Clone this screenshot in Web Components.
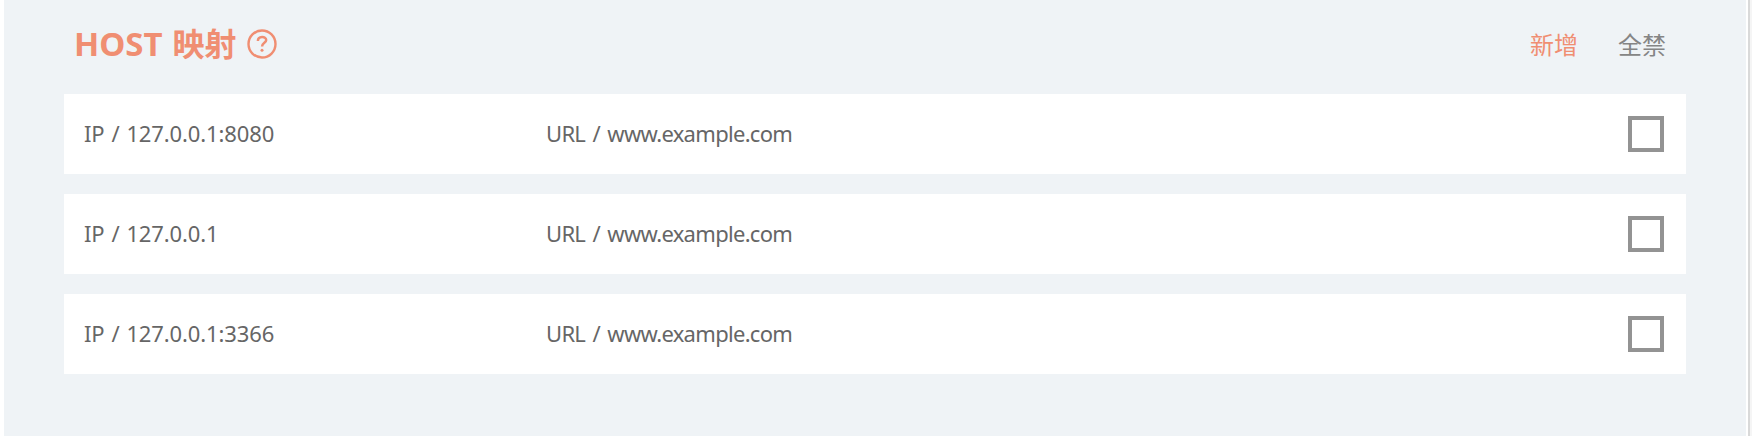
<!DOCTYPE html>
<html lang="zh-CN">
<head>
<meta charset="utf-8">
<title>HOST 映射</title>
<style>
html, body { margin: 0; height: 100%; background: #fff; overflow: hidden; }
</style>
</head>
<body>
<host-panel></host-panel>
<script>
class HelpIcon extends HTMLElement {
  constructor() {
    super();
    this.attachShadow({ mode: 'open' }).innerHTML = `
      <style>:host{display:block;width:30px;height:30px}svg{display:block}</style>
      <svg width="30" height="30" viewBox="0 0 30 30" fill="none" stroke="#f08e72">
        <circle cx="15" cy="15" r="13.5" stroke-width="2.4"/>
        <path d="M10.9 12C10.9 6.6 19.2 6.9 19.2 11.1C19.2 14 15.1 13.8 15.1 17.6" stroke-width="2.5"/>
        <circle cx="15" cy="21.3" r="1.5" fill="#f08e72" stroke="none"/>
      </svg>`;
  }
}
customElements.define('help-icon', HelpIcon);

class PanelAction extends HTMLElement {
  constructor() {
    super();
    this.attachShadow({ mode: 'open' }).innerHTML = `
      <style>
        :host{display:block;font:24px/32px "Noto Sans CJK SC",sans-serif;color:#858585;white-space:nowrap;cursor:pointer}
        :host([primary]){color:#f08e72}
      </style><slot></slot>`;
  }
}
customElements.define('panel-action', PanelAction);

class HostRow extends HTMLElement {
  constructor() {
    super();
    this.attachShadow({ mode: 'open' }).innerHTML = `
      <style>
        :host{display:grid;grid-template-columns:462px 1fr 36px;align-items:center;box-sizing:border-box;
          height:80px;padding:0 22px 0 20px;background:#fff;color:#666;
          font:22px/30px "Noto Sans",sans-serif;white-space:pre}
        .ip,.url{padding-bottom:2px}
        .ip{letter-spacing:-.12px;word-spacing:1.3px}
        .url{letter-spacing:-.7px;word-spacing:2.3px}
        .check{box-sizing:border-box;width:36px;height:36px;border:4px solid #939393}
      </style>
      <div class="ip"><slot name="ip"></slot></div>
      <div class="url"><slot name="url"></slot></div>
      <div class="check" role="checkbox" aria-checked="false"></div>`;
  }
}
customElements.define('host-row', HostRow);

class HostPanel extends HTMLElement {
  constructor() {
    super();
    this.attachShadow({ mode: 'open' }).innerHTML = `
      <style>
        :host{display:flex;height:100%;padding-left:4px;box-sizing:border-box}
        main{flex:1;box-sizing:border-box;padding:0 60px;background:#eff3f6}
        header{display:flex;align-items:center;height:94px;box-sizing:border-box;padding:0 20px 6px 10px}
        h1{display:flex;align-items:baseline;gap:10px;margin:0;padding-bottom:2px;color:#f08e72;white-space:nowrap;
          font:bold 33px/44px "Noto Sans",sans-serif}
        .cjk{font:bold 32px/44px "Noto Sans CJK SC",sans-serif}
        help-icon{margin-left:10.5px}
        nav{display:flex;gap:40px;margin-left:auto}
        .rows{display:grid;gap:20px}
        .edge{width:2px;margin-left:2px;background:#d9d9d9}
        .outer{width:2px;background:#f5f5f5}
      </style>
      <main>
        <header>
          <h1><span>HOST</span><span class="cjk">映射</span></h1>
          <help-icon></help-icon>
          <nav><panel-action primary>新增</panel-action><panel-action>全禁</panel-action></nav>
        </header>
        <div class="rows">
          <host-row><span slot="ip">IP / 127.0.0.1:8080</span><span slot="url">URL / www.example.com</span></host-row>
          <host-row><span slot="ip">IP / 127.0.0.1</span><span slot="url">URL / www.example.com</span></host-row>
          <host-row><span slot="ip">IP / 127.0.0.1:3366</span><span slot="url">URL / www.example.com</span></host-row>
        </div>
      </main>
      <div class="edge"></div><div class="outer"></div>`;
  }
}
customElements.define('host-panel', HostPanel);
</script>
</body>
</html>
